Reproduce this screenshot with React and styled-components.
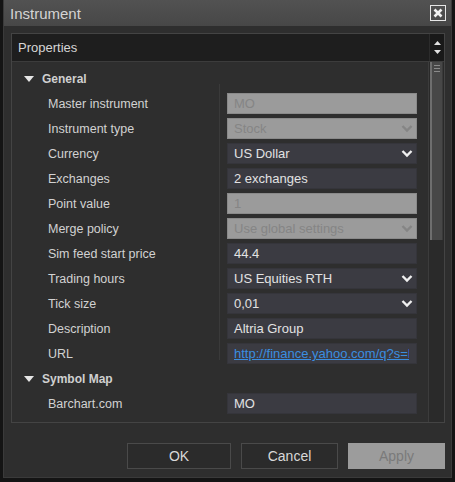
import React from 'react';
import styled, { createGlobalStyle } from 'styled-components';

const Global = createGlobalStyle`
    html, body {
        margin: 0;
        padding: 0;
        background: #141414;
        font-family: "Liberation Sans", Arial, sans-serif;
    }
`;

const Window = styled.div`
    margin-left: 3px;
    width: 449px;
    height: 478px;
    background: #2e2e2e;
    display: flex;
    flex-direction: column;
    box-sizing: border-box;
    border-left: 1px solid #3a3a3a;
    border-right: 1px solid #3a3a3a;
    border-bottom: 1px solid #3a3a3a;
`;

const TitleBar = styled.div`
    height: 26px;
    flex: none;
    background: linear-gradient(#525252, #474747);
    display: flex;
    align-items: center;
    justify-content: space-between;
    padding: 0 5px 0 6px;
    color: #d4d4d4;
    font-size: 15px;
`;

const CloseButton = styled.div`
    width: 14px;
    height: 14px;
    border: 1px solid #e6e6e6;
    display: flex;
    align-items: center;
    justify-content: center;
`;

const Panel = styled.div`
    margin: 7px 6px 0 7px;
    height: 388px;
    border: 1px solid #444;
    display: flex;
    flex-direction: column;
    overflow: hidden;
`;

const PanelHeader = styled.div`
    height: 27px;
    flex: none;
    background: #1e1e1e;
    display: flex;
    align-items: center;
    justify-content: space-between;
    padding-left: 6px;
    color: #d6d6d6;
    font-size: 13px;
    border-bottom: 1px solid #3c3c3c;
`;

const HeaderArrows = styled.div`
    width: 15px;
    height: 27px;
    display: flex;
    flex-direction: column;
    justify-content: space-around;
    align-items: center;
    padding: 4px 0;
    box-sizing: border-box;
    background: #191919;
    border-left: 1px solid #2c2c2c;
`;

const PanelBody = styled.div`
    flex: 1;
    display: flex;
    min-height: 0;
`;

const Grid = styled.div`
    flex: 1;
    min-width: 0;
    padding-top: 4px;
    display: grid;
    grid-template-columns: 208px minmax(0, 1fr);
    grid-auto-rows: 25px;
    align-content: start;
    background: linear-gradient(to right, transparent 207px, #3a3a3a 207px, #3a3a3a 208px, transparent 208px) no-repeat 0 22px / 100% 276px;
`;

const GroupHeader = styled.div`
    grid-column: 1 / 3;
    display: flex;
    align-items: center;
    padding-left: 12px;
    gap: 8px;
    font-size: 12px;
    font-weight: bold;
    color: #d0d0d0;
`;

const Label = styled.div`
    display: flex;
    align-items: center;
    padding-left: 36px;
    font-size: 12.5px;
    color: #d2d2d2;
`;

const ValueCell = styled.div`
    display: flex;
    align-items: center;
    padding: 0 11px 0 7px;
    min-width: 0;
`;

const ValueBox = styled.div`
    flex: 1;
    min-width: 0;
    height: 21px;
    box-sizing: border-box;
    display: flex;
    align-items: center;
    justify-content: space-between;
    padding: 0 3px 0 6px;
    font-size: 13px;
    overflow: hidden;
    white-space: nowrap;
    background: ${({ disabled }) => (disabled ? '#9b9b9b' : '#3b3b42')};
    color: ${({ disabled }) => (disabled ? '#858585' : '#e2e2e2')};
    border: 1px solid ${({ disabled }) => (disabled ? '#8a8a8a' : '#35353b')};
`;

const Link = styled.span`
    color: #3a8ee0;
    text-decoration: underline;
    overflow: hidden;
    white-space: nowrap;
    margin-right: 4px;
`;

const ScrollBar = styled.div`
    width: 15px;
    flex: none;
    background: #2a2a2a;
    border-left: 1px solid #3c3c3c;
    display: flex;
    flex-direction: column;
`;

const Thumb = styled.div`
    height: 175px;
    margin: 0 1px 0 1px;
    background: #474747;
    border-left: 2px solid #6e6e6e;
    border-right: 1px solid #3a3a3a;
    display: flex;
    flex-direction: column;
    gap: 2px;
    padding: 3px 2px 0;
`;

const GripLine = styled.div`
    height: 1px;
    background: #8a8a8a;
`;

const Footer = styled.div`
    flex: 1;
    display: flex;
    justify-content: flex-end;
    align-items: center;
    gap: 10px;
    padding: 12px 6px 0 0;
`;

const Button = styled.div`
    width: ${({ w }) => w}px;
    height: 26px;
    box-sizing: border-box;
    display: flex;
    align-items: center;
    justify-content: center;
    font-size: 14px;
    background: ${({ disabled }) => (disabled ? '#9c9c9c' : '#2b2b2b')};
    color: ${({ disabled }) => (disabled ? '#7a7a7a' : '#d8d8d8')};
    border: 1px solid ${({ disabled }) => (disabled ? '#9c9c9c' : '#4a4a4a')};
`;

const Chevron = ({ color }) => (
    <svg width="12" height="9" viewBox="0 0 12 9" style={{ flex: 'none' }}>
        <path d="M1.5 2 L6 6.5 L10.5 2" fill="none" stroke={color} strokeWidth="2.4" />
    </svg>
);

const Triangle = ({ up }) => (
    <svg width="7" height="4" viewBox="0 0 7 4">
        <path d={up ? 'M0 4 L3.5 0 L7 4 Z' : 'M0 0 L3.5 4 L7 0 Z'} fill="#e0e0e0" />
    </svg>
);

const rows = [
    { group: 'General' },
    { label: 'Master instrument', value: 'MO', disabled: true },
    { label: 'Instrument type', value: 'Stock', disabled: true, select: true },
    { label: 'Currency', value: 'US Dollar', select: true },
    { label: 'Exchanges', value: '2 exchanges' },
    { label: 'Point value', value: '1', disabled: true },
    { label: 'Merge policy', value: 'Use global settings', disabled: true, select: true },
    { label: 'Sim feed start price', value: '44.4' },
    { label: 'Trading hours', value: 'US Equities RTH', select: true },
    { label: 'Tick size', value: '0,01', select: true },
    { label: 'Description', value: 'Altria Group' },
    { label: 'URL', value: 'http://finance.yahoo.com/q?s=MO', link: true },
    { group: 'Symbol Map' },
    { label: 'Barchart.com', value: 'MO' },
];

const App = () => (
    <>
        <Global />
        <Window>
            <TitleBar>
                <span>Instrument</span>
                <CloseButton>
                    <svg width="10" height="10" viewBox="0 0 10 10">
                        <path d="M1.5 1.5 L8.5 8.5 M8.5 1.5 L1.5 8.5" stroke="#f0f0f0" strokeWidth="2.6" />
                    </svg>
                </CloseButton>
            </TitleBar>
            <Panel>
                <PanelHeader>
                    <span>Properties</span>
                    <HeaderArrows>
                        <Triangle up />
                        <Triangle />
                    </HeaderArrows>
                </PanelHeader>
                <PanelBody>
                    <Grid>
                        {rows.map((row, i) =>
                            row.group ? (
                                <GroupHeader key={i}>
                                    <svg width="10" height="6" viewBox="0 0 10 6">
                                        <path d="M0 0 L10 0 L5 6 Z" fill="#e6e6e6" />
                                    </svg>
                                    <span>{row.group}</span>
                                </GroupHeader>
                            ) : (
                                <React.Fragment key={i}>
                                    <Label>{row.label}</Label>
                                    <ValueCell>
                                        <ValueBox disabled={row.disabled}>
                                            {row.link ? <Link>{row.value}</Link> : <span>{row.value}</span>}
                                            {row.select && <Chevron color={row.disabled ? '#858585' : '#f0f0f0'} />}
                                        </ValueBox>
                                    </ValueCell>
                                </React.Fragment>
                            )
                        )}
                    </Grid>
                    <ScrollBar>
                        <Thumb>
                            <GripLine />
                            <GripLine />
                            <GripLine />
                        </Thumb>
                    </ScrollBar>
                </PanelBody>
            </Panel>
            <Footer>
                <Button w={104}>OK</Button>
                <Button w={97}>Cancel</Button>
                <Button w={97} disabled>Apply</Button>
            </Footer>
        </Window>
    </>
);

export default App;
